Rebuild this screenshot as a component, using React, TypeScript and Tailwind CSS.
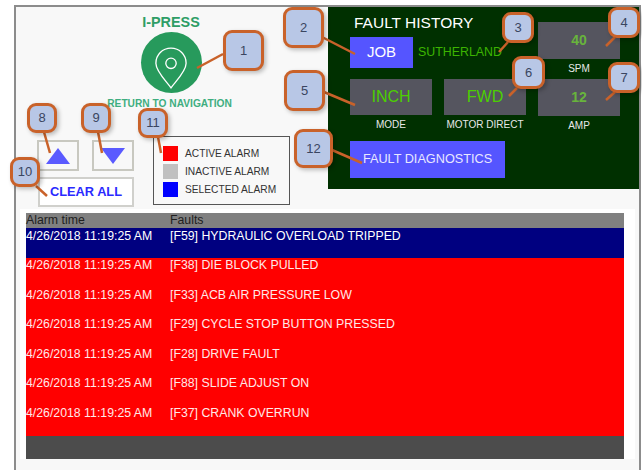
const rows: [string, boolean][] = [
  ["[F59] HYDRAULIC OVERLOAD TRIPPED", true],
  ["[F38] DIE BLOCK PULLED", false],
  ["[F33] ACB AIR PRESSURE LOW", false],
  ["[F29] CYCLE STOP BUTTON PRESSED", false],
  ["[F28] DRIVE FAULT", false],
  ["[F88] SLIDE ADJUST ON", false],
  ["[F37] CRANK OVERRUN", false],
];

const callouts: { n: string; x: number; y: number; w: number; h: number; line: [number, number, number, number] }[] = [
  { n: "1", x: 223, y: 30, w: 41, h: 41, line: [223, 54, 197, 68] },
  { n: "2", x: 283, y: 7, w: 41, h: 41, line: [322, 37, 355, 54] },
  { n: "3", x: 502, y: 12, w: 32, h: 31, line: [508, 42, 499, 52] },
  { n: "4", x: 608, y: 7, w: 32, h: 31, line: [615, 37, 606, 46] },
  { n: "5", x: 284, y: 70, w: 41, h: 41, line: [324, 92, 355, 105] },
  { n: "6", x: 512, y: 56, w: 33, h: 33, line: [517, 88, 509, 96] },
  { n: "7", x: 608, y: 62, w: 32, h: 31, line: [615, 92, 606, 100] },
  { n: "8", x: 27, y: 103, w: 30, h: 30, line: [44, 132, 50, 153] },
  { n: "9", x: 81, y: 103, w: 30, h: 30, line: [98, 132, 102, 153] },
  { n: "10", x: 10, y: 157, w: 30, h: 30, line: [36, 186, 47, 196] },
  { n: "11", x: 138, y: 108, w: 30, h: 30, line: [158, 137, 161, 153] },
  { n: "12", x: 294, y: 129, w: 39, h: 39, line: [332, 150, 362, 163] },
];

function ValueBox({ value, label, bold }: { value: string; label: string; bold?: boolean }) {
  return (
    <div className="flex flex-col items-center">
      <div
        className={
          bold
            ? "flex h-[37px] w-[82px] items-center justify-center bg-[#55555f] text-[14px] font-bold text-[#68b43c]"
            : "flex h-[36px] w-[82px] items-center justify-center bg-[#55555f] text-[16px] text-[#4cd000]"
        }
      >
        {value}
      </div>
      <div className="mt-[3px] text-[10px] leading-[14px] text-[#e8e8e8]">{label}</div>
    </div>
  );
}

function LegendRow({ color, label }: { color: string; label: string }) {
  return (
    <div className="flex h-[18px] items-center gap-[7px]">
      <div className={`h-[15px] w-[15px] ${color}`} />
      <span className="text-[10.2px] text-[#333333]">{label}</span>
    </div>
  );
}

export default function App() {
  return (
    <div className="relative h-[470px] w-[642px] overflow-hidden bg-white pl-[14px] pt-[5px] font-['Liberation_Sans',Arial,sans-serif]">
      <div className="h-[480px] w-[627px] border-2 border-[#8c8c8c] bg-[#f8f8f8]">
        <div className="flex h-[184px]">
          <div className="w-[312px] shrink-0">
            <div className="ml-[45px] flex w-[220px] flex-col items-center pt-[7px]">
              <div className="text-[14.4px] font-bold leading-[16px] text-[#2e9e66]">I-PRESS</div>
              <div className="mt-[2px] flex h-[61px] w-[61px] items-center justify-center rounded-full bg-[#279a5c] pt-[10px]">
                <svg width="34" height="44" viewBox="0 0 36 46" fill="none" stroke="#ffffff" strokeWidth="1.4">
                  <path d="M18 44 C14 38 2 27 2 18 C2 9 9 2 18 2 C27 2 34 9 34 18 C34 27 22 38 18 44 Z" />
                  <circle cx="18" cy="18" r="5.5" />
                </svg>
              </div>
              <div className="mr-[3px] mt-[5px] text-[10.2px] font-bold leading-[12px] text-[#3fae80]">RETURN TO NAVIGATION</div>
            </div>
            <div className="mt-[30px] flex pl-[21px]">
              <div className="flex w-[97px] flex-col">
                <div className="flex gap-[13px]">
                  <div className="flex h-[31px] w-[42px] items-center justify-center border-2 border-[#c8c8c0]">
                    <svg width="24" height="16" viewBox="0 0 24 16"><path d="M12 0 L24 16 L0 16 Z" fill="#5a5aff" /></svg>
                  </div>
                  <div className="flex h-[31px] w-[42px] items-center justify-center border-2 border-[#c8c8c0]">
                    <svg width="24" height="16" viewBox="0 0 24 16"><path d="M0 0 L24 0 L12 16 Z" fill="#5a5aff" /></svg>
                  </div>
                </div>
                <div className="ml-[1px] mt-[6px] flex h-[30px] w-[96px] items-center justify-center border-2 border-[#d0d0cc] bg-white text-[12.8px] font-bold text-[#2a2aff]">
                  CLEAR ALL
                </div>
              </div>
              <div className="ml-[19px] mt-[-4px] flex h-[69px] w-[137px] flex-col justify-center border border-[#555555] pl-[9px] pt-[2px]">
                <LegendRow color="bg-[#ff0000]" label="ACTIVE ALARM" />
                <LegendRow color="bg-[#c0c0c0]" label="INACTIVE ALARM" />
                <LegendRow color="bg-[#0000ff]" label="SELECTED ALARM" />
              </div>
            </div>
          </div>
          <div className="grid h-[182px] w-[311px] grid-cols-[82px_82px_82px] content-start gap-x-[12px] gap-y-[3px] bg-[#003000] pl-[22px] pt-[15px]">
            <div className="col-span-2">
              <div className="mt-[-7px] pl-[4px] text-[15.5px] leading-[15px] text-white">FAULT HISTORY</div>
              <div className="mt-[7px] flex items-center">
                <div className="flex h-[31px] w-[63px] items-center justify-center bg-[#5555ff] text-[15px] text-white">JOB</div>
                <span className="ml-[5px] text-[12.4px] text-[#3cb400]">SUTHERLAND</span>
              </div>
            </div>
            <ValueBox value="40" label="SPM" bold />
            <ValueBox value="INCH" label="MODE" />
            <ValueBox value="FWD" label="MOTOR DIRECT" />
            <ValueBox value="12" label="AMP" bold />
            <div className="col-span-3 mt-[5px] flex h-[37px] w-[155px] items-center justify-center bg-[#5555ff] text-[12.7px] text-[#e8e8ff]">
              FAULT DIAGNOSTICS
            </div>
          </div>
        </div>
        <div className="mx-[4px] mt-[18px] bg-white px-[6px] pt-[4px]">
          <div className="w-[598px] text-[12.3px]">
            <div className="flex h-[15px] items-center bg-[#808080] leading-[15px] text-[#202020]">
              <span className="w-[144px]">Alarm time</span>
              <span>Faults</span>
            </div>
            {rows.map(([text, selected]) => (
              <div
                key={text}
                className={
                  selected
                    ? "flex h-[30px] bg-[#000080] leading-[16px] text-white"
                    : "flex h-[29.6px] bg-[#ff0000] leading-[15px] text-[#ffe8e8]"
                }
              >
                <span className="w-[144px]">4/26/2018 11:19:25 AM</span>
                <span>{text}</span>
              </div>
            ))}
            <div className="h-[23px] bg-[#4c4c4c]" />
          </div>
        </div>
      </div>

      <svg className="pointer-events-none absolute left-0 top-0" width="642" height="470">
        {callouts.map((c) => (
          <line key={c.n} x1={c.line[0]} y1={c.line[1]} x2={c.line[2]} y2={c.line[3]} stroke="#c9622a" strokeWidth="2.5" />
        ))}
      </svg>
      {callouts.map((c) => (
        <div
          key={c.n}
          className="absolute flex items-center justify-center rounded-[9px] border-[3px] border-[#c9622a] bg-[#b8c7e6] text-[13px] text-[#3a4560] shadow-[2px_2px_4px_rgba(0,0,0,0.25)]"
          style={{ left: c.x, top: c.y, width: c.w, height: c.h }}
        >
          {c.n}
        </div>
      ))}
    </div>
  );
}
